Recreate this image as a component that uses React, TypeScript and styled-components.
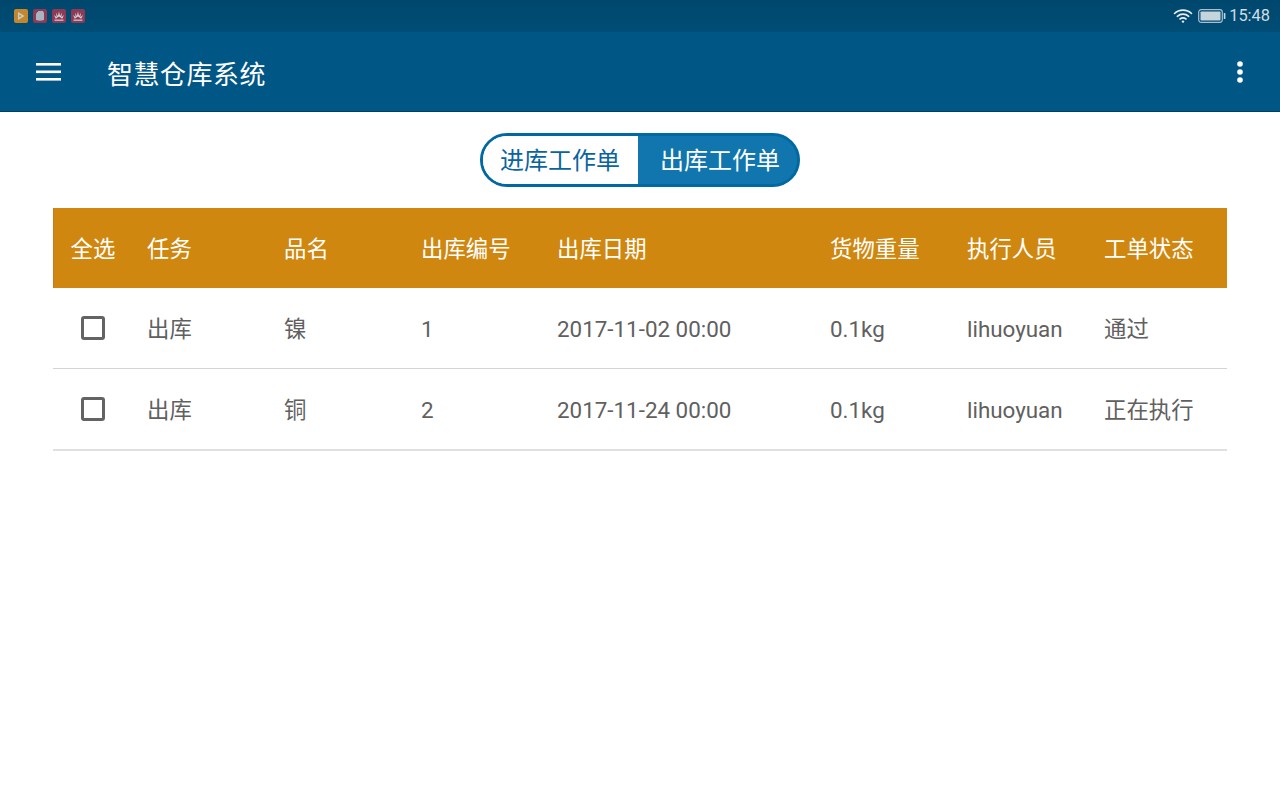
import React from "react";
import styled, { createGlobalStyle } from "styled-components";

const Global = createGlobalStyle`
  html, body { margin: 0; padding: 0; background: #fff; }
  body { font-family: Roboto, "Noto Sans CJK SC", sans-serif; }
  #root { width: 1280px; height: 800px; overflow: hidden; }
`;
const Page = styled.div`width: 1280px; height: 800px; display: flex; flex-direction: column; background: #fff;`;
const StatusBar = styled.div`
  height: 32px; flex: none; display: flex; align-items: center; justify-content: space-between;
  padding: 0 10px 0 14px; box-sizing: border-box; background: linear-gradient(180deg, #00476d, #004d76);
`;
const NoticeIcons = styled.div`display: flex; align-items: center; gap: 5px;`;
const RightStatus = styled.div`display: flex; align-items: center; color: #cfdde6; font-size: 16.4px; line-height: 32px;`;
const Clock = styled.span`margin-left: 3px;`;
const Toolbar = styled.header`
  height: 80px; flex: none; box-sizing: border-box; display: flex; align-items: center; background: #005684;
  border-bottom: 1px solid #003f63; padding: 0 37px 0 36px; color: #fff;
`;
const Title = styled.h1`margin: 2px 0 0 46px; flex: 1; font-size: 26px; letter-spacing: 0.5px; font-weight: 400; line-height: 78px; font-family: "Noto Sans CJK SC", sans-serif;`;
const Main = styled.main`padding: 21px 53px 0; display: flex; flex-direction: column; align-items: center;`;
const Toggle = styled.div`
  width: 320px; height: 54px; box-sizing: border-box; border: 3px solid #0068a3; border-radius: 27px; display: flex; overflow: hidden; margin-bottom: 21px;
  background: linear-gradient(90deg, #fff 50%, #1175ae 50%);
`;
const Segment = styled.div<{ $active?: boolean }>`
  flex: ${p => (p.$active ? "1 1 0" : "none")}; width: ${p => (p.$active ? "auto" : "155px")};
  box-sizing: border-box; padding: ${p => (p.$active ? "0 0 3px 5px" : "0 1px 3px 0")};
  display: flex; align-items: center; justify-content: center; font-size: 24px; font-family: "Noto Sans CJK SC", sans-serif;
  background: ${p => (p.$active ? "#1175ae" : "#fff")}; color: ${p => (p.$active ? "#fff" : "#0a659e")};
`;
const Table = styled.div`width: 1174px; display: flex; flex-direction: column;`;
const Row = styled.div<{ $header?: boolean }>`
  display: grid; grid-template-columns: 81px 137px 137px 136px 273px 137px 137px 1fr; align-items: center; box-sizing: border-box;
  height: ${p => (p.$header ? "80px" : "81px")};
  background: ${p => (p.$header ? "#d0870f" : "#fff")};
  color: ${p => (p.$header ? "#fff" : "#606060")};
  border-bottom: ${p => (p.$header ? "none" : "1px solid #d4d4d4")};
  box-shadow: ${p => (p.$header ? "inset 1px 0 #c67c10" : "none")};
  &:last-child { height: 82px; border-bottom: 2px solid #e0e0e0; }
`;
const Cell = styled.div<{ $header?: boolean }>`
  padding: 2px 0 0 13px; font-size: 22.4px; line-height: 32px; white-space: nowrap;
  font-family: Roboto, "Noto Sans CJK SC", sans-serif; color: inherit;
`;
const CheckCell = styled.div`display: flex; justify-content: center; padding-right: 1px; font-size: 22.4px; line-height: 32px; font-family: "Noto Sans CJK SC", sans-serif;`;
const HeaderCheckLabel = styled.span`display: block; margin-top: -2px;`;
const Box = styled.span`width: 24px; height: 24px; box-sizing: border-box; border: 3px solid #636363; border-radius: 3px; display: block;`;

const Mini = ({ bg, kind }: { bg: string; kind: "play" | "doc" | "petal" }) => (
  <svg width="14" height="14" viewBox="0 0 14 14">
    <rect width="14" height="14" rx="2" fill={bg} />
    {kind === "play" && <path d="M4 3 L10.5 7 L4 11 Z M5.4 5.6 V8.4 L7.7 7 Z" fill="#c4d0d2" fillRule="evenodd" />}
    {kind === "doc" && <path d="M3 4.5 L5.5 2 H10 L11 4 V11 Q7 12.5 3 11 Z" fill="#a9b4c0" />}
    {kind === "petal" && (
      <g fill="#d7d9de">
        <path d="M7 2.5 L8.2 7.8 H5.8 Z" /><path d="M4 3.5 L6.3 8 L4.8 8.8 Z" /><path d="M10 3.5 L7.7 8 L9.2 8.8 Z" /><path d="M2 6 L5.4 8.8 L3.8 9.8 Z" /><path d="M12 6 L8.6 8.8 L10.2 9.8 Z" />
        <rect x="2.5" y="10.6" width="9" height="1.1" />
      </g>
    )}
  </svg>
);

const Wifi = () => (
  <svg width="20" height="16" viewBox="0 0 20 16" fill="none" stroke="#e8eef2" strokeWidth="1.6" strokeLinecap="round">
    <path d="M1.5 5.5 C6 1 14 1 18.5 5.5" /><path d="M4.3 8.3 C7.5 5.4 12.5 5.4 15.7 8.3" /><path d="M7 11 C8.8 9.6 11.2 9.6 13 11" />
    <circle cx="10" cy="13.6" r="1.2" fill="#e8eef2" stroke="none" />
  </svg>
);
const Battery = () => (
  <svg width="28" height="14" viewBox="0 0 28 14" style={{ marginLeft: 5 }}>
    <rect x="0.7" y="0.7" width="23.6" height="12.6" rx="2.5" fill="none" stroke="#a9bfcd" strokeWidth="1.2" />
    <rect x="2.5" y="2.5" width="20" height="9" rx="0.8" fill="#c6d4dc" />
    <rect x="25.8" y="4" width="1.6" height="6" rx="0.6" fill="#c6d4dc" />
  </svg>
);
const Menu = () => (
  <svg width="25" height="18" viewBox="0 0 25 18" fill="#fff">
    <rect y="0" width="25" height="2.6" /><rect y="7.5" width="25" height="2.6" /><rect y="15" width="25" height="2.6" />
  </svg>
);
const More = () => (
  <svg width="6" height="22" viewBox="0 0 6 22" fill="#fff">
    <circle cx="3" cy="3" r="2.8" /><circle cx="3" cy="11" r="2.8" /><circle cx="3" cy="19" r="2.8" />
  </svg>
);

const headers = ["任务", "品名", "出库编号", "出库日期", "货物重量", "执行人员", "工单状态"];
const rows = [
  ["出库", "镍", "1", "2017-11-02 00:00", "0.1kg", "lihuoyuan", "通过"],
  ["出库", "铜", "2", "2017-11-24 00:00", "0.1kg", "lihuoyuan", "正在执行"],
];

export default function App() {
  return (
    <Page>
      <Global />
      <StatusBar>
        <NoticeIcons>
          <Mini bg="#c5872c" kind="play" />
          <Mini bg="#8d3a55" kind="doc" />
          <Mini bg="#8d3a55" kind="petal" />
          <Mini bg="#8d3a55" kind="petal" />
        </NoticeIcons>
        <RightStatus>
          <Wifi /><Battery /><Clock>15:48</Clock>
        </RightStatus>
      </StatusBar>
      <Toolbar>
        <Menu />
        <Title>智慧仓库系统</Title>
        <More />
      </Toolbar>
      <Main>
        <Toggle>
          <Segment>进库工作单</Segment>
          <Segment $active>出库工作单</Segment>
        </Toggle>
        <Table>
          <Row $header>
            <CheckCell><HeaderCheckLabel>全选</HeaderCheckLabel></CheckCell>
            {headers.map(h => <Cell $header key={h}>{h}</Cell>)}
          </Row>
          {rows.map(r => (
            <Row key={r[2]}>
              <CheckCell><Box /></CheckCell>
              {r.map((c, i) => <Cell key={i}>{c}</Cell>)}
            </Row>
          ))}
        </Table>
      </Main>
    </Page>
  );
}
